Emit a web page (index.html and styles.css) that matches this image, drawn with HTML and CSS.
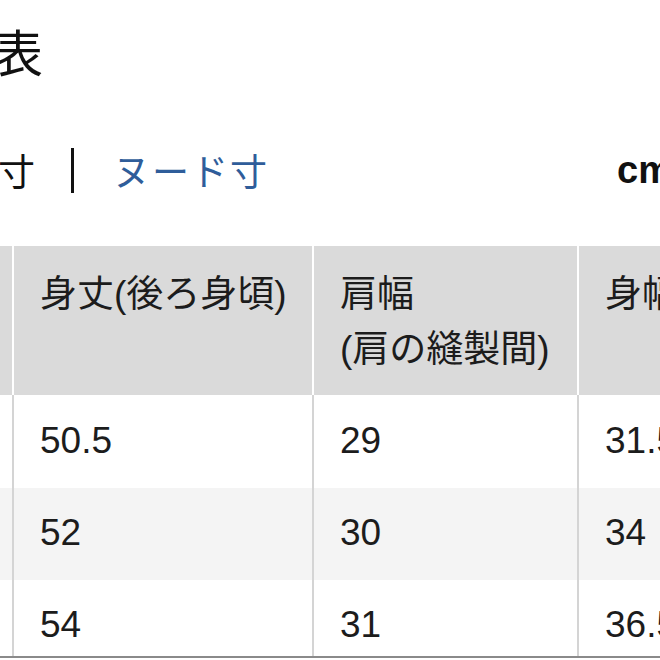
FILE: index.html
```html
<!DOCTYPE html>
<html lang="ja">
<head>
<meta charset="utf-8">
<title>サイズ表</title>
<link rel="stylesheet" href="styles.css">
</head>
<body>
<div class="page">
  <h1 class="title">表</h1>
  <div class="tabs">
    <span class="tab current">寸</span>
    <span class="sep"></span>
    <span class="tab link">ヌード寸</span>
    <span class="unit">cm</span>
  </div>
  <div class="table-wrap">
    <div class="grid">
      <div class="cell head first"></div>
      <div class="cell head">身丈(後ろ身頃)</div>
      <div class="cell head">肩幅<br>(肩の縫製間)</div>
      <div class="cell head last">身幅</div>

      <div class="cell body first"></div>
      <div class="cell body">50.5</div>
      <div class="cell body">29</div>
      <div class="cell body last">31.5</div>

      <div class="cell body alt first"></div>
      <div class="cell body alt">52</div>
      <div class="cell body alt">30</div>
      <div class="cell body alt last">34</div>

      <div class="cell body first"></div>
      <div class="cell body">54</div>
      <div class="cell body">31</div>
      <div class="cell body last">36.5</div>
    </div>
  </div>
</div>
</body>
</html>
```

FILE: styles.css
```css
html, body {
  margin: 0;
  padding: 0;
  overflow: hidden;
  background: #fff;
}

body {
  width: 660px;
  height: 660px;
  font-family: "Liberation Sans", "Noto Sans CJK JP", sans-serif;
  color: #1c1c1c;
}

.page {
  width: 720px;
}

.title {
  margin: 0;
  padding-top: 20px;
  margin-left: -7px;
  font-family: "Noto Sans CJK JP", sans-serif;
  font-weight: 400;
  font-size: 50px;
  line-height: 60px;
  color: #111;
}

.tabs {
  display: flex;
  align-items: center;
  height: 50px;
  margin-top: 65px;
  width: 672px;
  font-size: 37px;
}

.tab {
  font-family: "Noto Sans CJK JP", sans-serif;
  line-height: 50px;
}

.current {
  margin-left: -2px;
  color: #111;
}

.sep {
  width: 3px;
  height: 45px;
  background: #111;
  margin: 0 39px 0 36px;
}

.link {
  color: #2f5d9a;
  letter-spacing: 2px;
}

.unit {
  margin-left: auto;
  font-weight: 700;
  font-size: 38px;
  color: #111;
}

.table-wrap {
  margin-top: 51px;
  height: 412px;
  overflow: hidden;
  border-bottom: 2px solid #8a8a8a;
  box-sizing: border-box;
}

.grid {
  display: grid;
  grid-template-columns: 14px 300px 265px 141px;
  grid-template-rows: 149px 93px 92px 92px;
  font-size: 37px;
}

.cell {
  box-sizing: border-box;
  padding-left: 26px;
  border-right: 2px solid #d4d4d4;
  white-space: nowrap;
}

.cell.first {
  padding: 0;
}

.cell.last {
  border-right: none;
}

.head {
  background: #dadada;
  border-right-color: #ffffff;
  padding-top: 21px;
  line-height: 55px;
}

.body {
  display: flex;
  align-items: center;
  background: #fff;
  padding-bottom: 2px;
}

.body.alt {
  background: #f4f4f4;
}
```
